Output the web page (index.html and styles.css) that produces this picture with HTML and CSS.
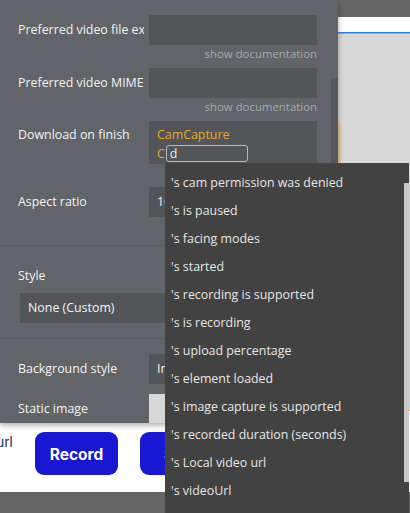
FILE: index.html
```html
<!DOCTYPE html>
<html lang="en">
<head>
    <meta charset="UTF-8">
    <meta name="viewport" content="width=device-width, initial-scale=1.0">
    <title>Video recorder - properties</title>
    <link rel="stylesheet" href="styles.css">
</head>
<body>
    <div class="topbar"></div>
    <div class="canvas">
        <div class="canvas-head"></div>
        <div class="canvas-group"></div>
        <div class="canvas-row">
            <div class="url-text"><span>Local video url</span></div>
            <button class="action">Record</button>
            <button class="action">Stop</button>
            <button class="action">Upload</button>
        </div>
        <div class="selected-mark"></div>
    </div>
    <div class="bottombar"></div>

    <div class="editor">
        <div class="section">
            <div class="field">
                <div class="label">Preferred video file extension</div>
                <div class="input"></div>
            </div>
            <div class="doc">show documentation</div>

            <div class="field">
                <div class="label">Preferred video MIME type</div>
                <div class="input"></div>
            </div>
            <div class="doc">show documentation</div>

            <div class="field field-top">
                <div class="label">Download on finish</div>
                <div class="input input-expr">
                    <div class="expr-line">CamCapture</div>
                    <div class="expr-line">C<span class="expr-box">d</span></div>
                </div>
            </div>
            <div class="doc">show documentation</div>

            <div class="field">
                <div class="label">Aspect ratio</div>
                <div class="input">16:9</div>
            </div>
        </div>

        <div class="section section-style">
            <div class="label">Style</div>
            <div class="select">None (Custom)</div>
        </div>

        <div class="section section-bg">
            <div class="field">
                <div class="label">Background style</div>
                <div class="input">Image</div>
            </div>
            <div class="field">
                <div class="label">Static image</div>
                <div class="input input-image"></div>
            </div>
        </div>

        <div class="editor-scroll"></div>
    </div>

    <div class="suggestions">
        <div class="item">'s cam permission was denied</div>
        <div class="item">'s is paused</div>
        <div class="item">'s facing modes</div>
        <div class="item">'s started</div>
        <div class="item">'s recording is supported</div>
        <div class="item">'s is recording</div>
        <div class="item">'s upload percentage</div>
        <div class="item">'s element loaded</div>
        <div class="item">'s image capture is supported</div>
        <div class="item">'s recorded duration (seconds)</div>
        <div class="item">'s Local video url</div>
        <div class="item">'s videoUrl</div>
        <div class="suggestions-scroll"></div>
    </div>
</body>
</html>
```

FILE: styles.css
```css
body {
    margin: 0;
    width: 410px;
    height: 513px;
    overflow: hidden;
    background: #666666;
    font-family: 'Open Sans', 'DejaVu Sans', sans-serif;
    position: relative;
}

.topbar {
    height: 17px;
}

.canvas {
    position: relative;
    height: 475px;
    background: #ffffff;
}
.canvas-head {
    height: 15px;
    border-bottom: 1px solid #2b84e0;
}
.canvas-group {
    height: 376px;
    background: #d9d9d9;
    border-top: 1px solid #e59a3c;
    border-bottom: 1px solid #e59a3c;
}
.canvas-row {
    display: flex;
    align-items: flex-start;
    gap: 22px;
    padding-top: 21px;
}
.url-text {
    width: 13px;
    overflow: hidden;
    display: flex;
    justify-content: flex-end;
    white-space: nowrap;
    font-family: 'Roboto', sans-serif;
    font-size: 15px;
    line-height: 20px;
    color: #34416a;
}
.action {
    width: 83px;
    height: 43px;
    border: none;
    border-radius: 9px;
    background: #1818d4;
    color: #ffffff;
    font-family: 'Inter', 'Roboto', sans-serif;
    font-weight: 700;
    font-size: 15.5px;
    padding-top: 2px;
}
.selected-mark {
    position: absolute;
    left: 338px;
    top: 104px;
    width: 3px;
    height: 42px;
    background: linear-gradient(to right, #eec190, #dccfbf);
}

/* floating property editor */
.editor {
    position: absolute;
    top: 0;
    left: 0;
    width: 338px;
    height: 423px;
    overflow: hidden;
    background: #616569;
    box-shadow: 0 2px 6px rgba(0, 0, 0, 0.35);
    color: #f2f2f2;
    font-size: 12.4px;
}
.editor-scroll {
    position: absolute;
    top: 78px;
    right: 0;
    bottom: 0;
    width: 7px;
    background: #55595c;
}
.section {
    padding: 15px 21px 28px 18px;
    border-bottom: 1px solid #575b5f;
}
.section-style {
    padding-top: 22px;
    padding-bottom: 15px;
}
.section-bg {
    padding-top: 15px;
    border-bottom: none;
}
.field {
    display: flex;
    align-items: center;
    margin-top: 7px;
}
.field:first-child {
    margin-top: 0;
}
.section-bg .field + .field {
    margin-top: 10px;
}
.field-top {
    align-items: flex-start;
}
.label {
    width: 125.5px;
    margin-right: 5.5px;
    flex-shrink: 0;
    overflow: hidden;
    white-space: nowrap;
    line-height: 16px;
}
.field-top .label {
    padding-top: 6px;
}
.input {
    width: 160px;
    height: 30px;
    padding-left: 8px;
    background: #535659;
    line-height: 30px;
    white-space: nowrap;
    overflow: hidden;
}
.input-expr {
    height: 37px;
    padding-top: 6px;
    line-height: 16px;
    color: #eaa623;
}
.expr-line {
    display: flex;
    align-items: center;
    height: 16px;
}
.expr-line + .expr-line {
    height: 17px;
    margin-top: 2px;
}
.expr-box {
    box-sizing: border-box;
    width: 82px;
    height: 17px;
    margin-left: 1px;
    padding-left: 3px;
    border: 1px solid #b9b9b9;
    border-radius: 3px;
    color: #f2f2f2;
    line-height: 15px;
}
.input-image {
    background: #d7d7d7;
}
.doc {
    margin-top: 2px;
    text-align: right;
    font-size: 11.4px;
    line-height: 14px;
    color: #a7a9ab;
}
.select {
    margin: 9px 0 0 2px;
    height: 30px;
    padding-left: 8px;
    background: #535659;
    line-height: 30px;
}

/* autocomplete dropdown */
.suggestions {
    position: absolute;
    top: 163px;
    left: 165px;
    width: 244px;
    height: 350px;
    padding-top: 6px;
    box-sizing: border-box;
    background: #424242;
    color: #e6e6e6;
    font-size: 12.4px;
}
.item {
    height: 28px;
    line-height: 28px;
    padding-left: 6px;
    white-space: nowrap;
}
.suggestions-scroll {
    position: absolute;
    top: 20px;
    right: 0;
    width: 5px;
    height: 299px;
    background: #c8c8c8;
}
```
